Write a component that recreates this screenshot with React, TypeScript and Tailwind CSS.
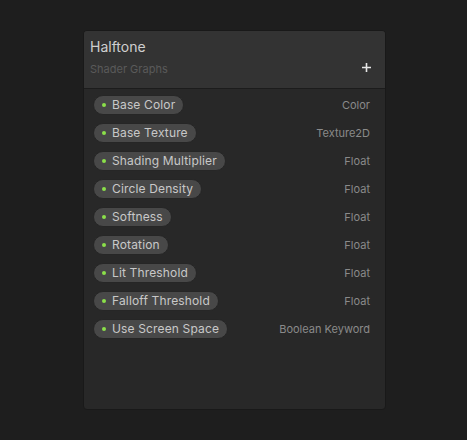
const rows: { name: string; type: string }[] = [
  { name: 'Base Color', type: 'Color' },
  { name: 'Base Texture', type: 'Texture2D' },
  { name: 'Shading Multiplier', type: 'Float' },
  { name: 'Circle Density', type: 'Float' },
  { name: 'Softness', type: 'Float' },
  { name: 'Rotation', type: 'Float' },
  { name: 'Lit Threshold', type: 'Float' },
  { name: 'Falloff Threshold', type: 'Float' },
  { name: 'Use Screen Space', type: 'Boolean Keyword' },
]

export default function App() {
  return (
    <div
      className="h-[440px] w-[467px] bg-[#1e1e1e] pl-[83px] pt-[30px]"
      style={{ fontFamily: 'Inter, "Noto Sans", sans-serif' }}
    >
      <div className="flex h-[380px] w-[303px] flex-col overflow-hidden rounded-[4px] border border-[#191919] bg-[#282828]">
        <div className="flex h-[58px] flex-col border-b border-[#1c1c1c] bg-[#333333] pl-[6px] pr-[13px] pt-[7px]">
          <div className="text-[14px] leading-[18px] text-[#cfcfcf]">Halftone</div>
          <div className="mt-[6px] flex items-center justify-between">
            <span className="text-[11px] leading-[14px] text-[#5a5a5a]">Shader Graphs</span>
            <svg width="11" height="11" viewBox="0 0 11 11" className="mt-[-4px]">
              <path d="M5.5 1v9M1 5.5h9" stroke="#e6e6e6" strokeWidth="1.6" />
            </svg>
          </div>
        </div>
        <div className="flex flex-col gap-[8px] pl-[9px] pr-[15px] pt-[6px]">
          {rows.map((r) => (
            <div key={r.name} className="flex h-[20px] items-center justify-between">
              <div className="flex h-[20px] items-center gap-[6px] rounded-full border border-[#262626] bg-[#484848] pl-[8px] pr-[8px]">
                <span className="h-[4px] w-[4px] rounded-full bg-[#8be04a]" />
                <span className="text-[12px] leading-none tracking-[0.15px] text-[#c8c8c8]">{r.name}</span>
              </div>
              <span className="text-[11px] text-[#8a8a8a]">{r.type}</span>
            </div>
          ))}
        </div>
      </div>
    </div>
  )
}
